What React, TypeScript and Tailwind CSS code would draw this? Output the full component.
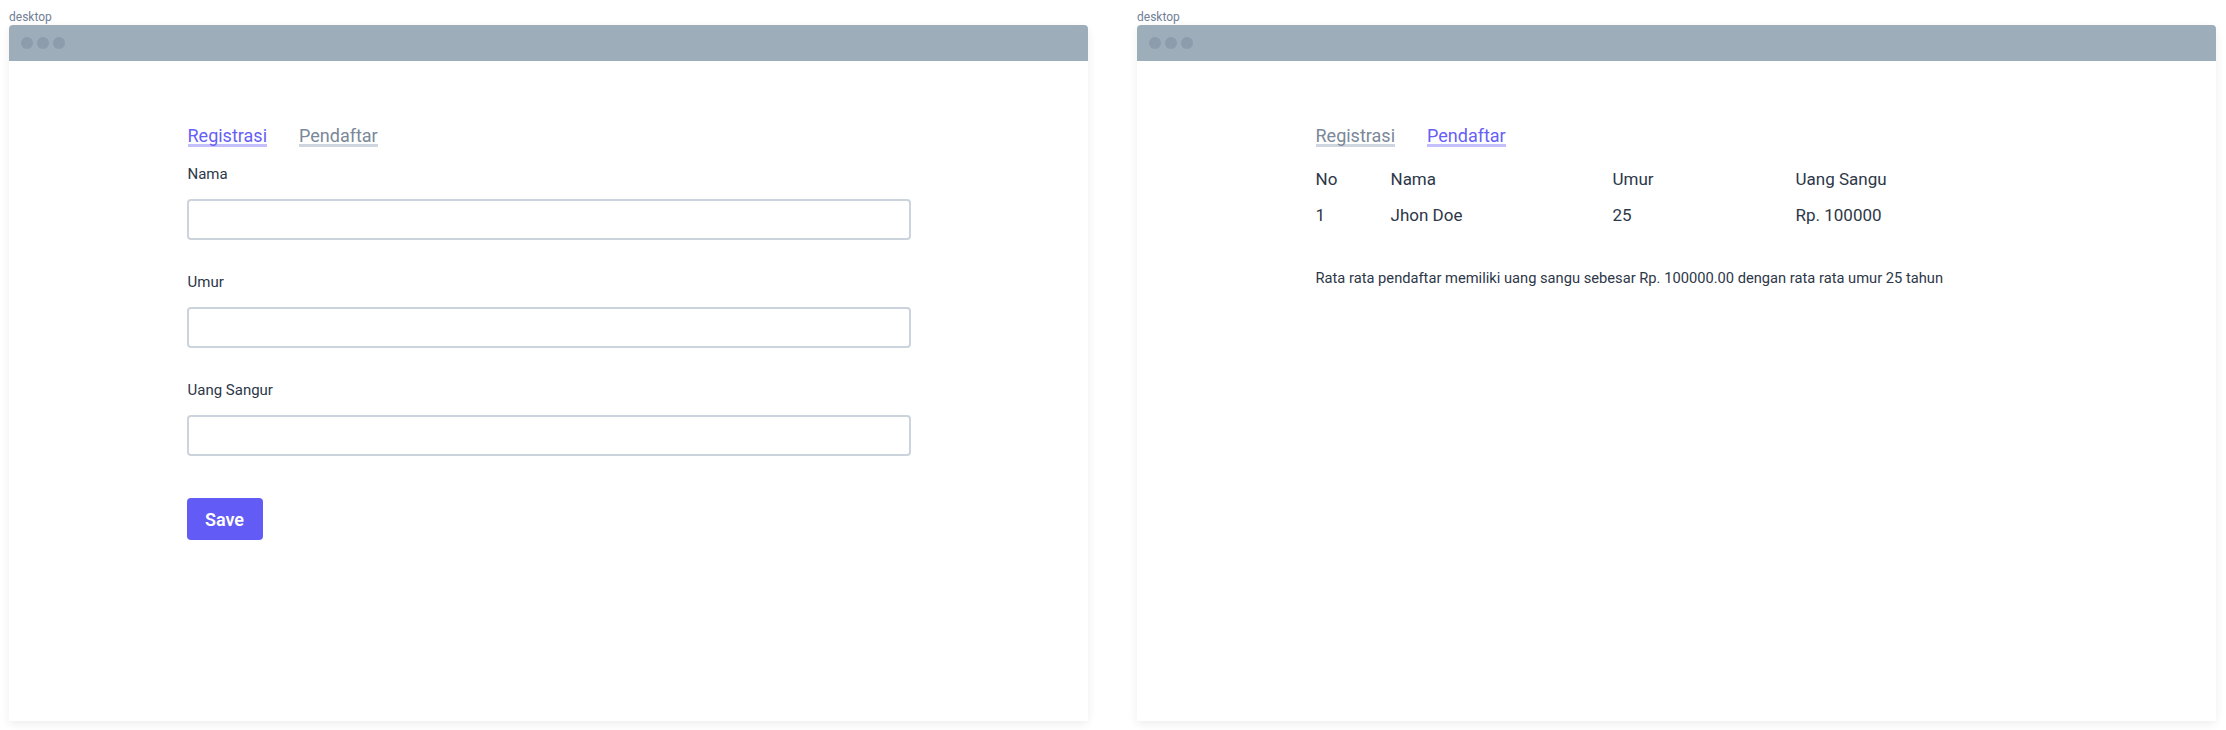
import React from 'react';

type Tab = 'registrasi' | 'pendaftar';

interface Pendaftar {
  no: number;
  nama: string;
  umur: number;
  uang: number;
}

const data: Pendaftar[] = [{ no: 1, nama: 'Jhon Doe', umur: 25, uang: 100000 }];

const Tabs: React.FC<{ active: Tab }> = ({ active }) => {
  const cls = (on: boolean) =>
    on
      ? 'inline-block leading-[16px] border-b-[3px] border-[#c4c0fd] text-[#675ff5]'
      : 'inline-block leading-[16px] border-b-[3px] border-[#cfd6df] text-[#7a8898]';
  return (
    <div className="flex gap-[32px] pl-[1px] text-[18px]">
      <span className={cls(active === 'registrasi')}>Registrasi</span>
      <span className={cls(active === 'pendaftar')}>Pendaftar</span>
    </div>
  );
};

const Field: React.FC<{ label: string; first?: boolean }> = ({ label, first }) => (
  <div className={first ? 'mt-[16px]' : 'mt-[31px]'}>
    <label className="block pl-[1px] text-[15px] leading-[22px] text-[#2d3748]">{label}</label>
    <input
      type="text"
      className="mt-[14px] block w-full h-[41px] rounded-[4px] border-2 border-[#cbd3dc] bg-white px-3 outline-none"
    />
  </div>
);

const Frame: React.FC<{ children: React.ReactNode }> = ({ children }) => (
  <div className="w-[1079px] flex flex-col">
    <div className="text-[12px] leading-[16px] text-[#718096] pt-[9px] h-[25px]">desktop</div>
    <div className="h-[696px] bg-white shadow-[0_3px_10px_rgba(0,0,0,0.07)] rounded-t-[4px] flex flex-col">
      <div className="h-[36px] bg-[#9eadba] rounded-t-[4px] flex items-center gap-[4px] pl-[12px]">
        <span className="w-[12px] h-[12px] rounded-full bg-[#8c9cac]" />
        <span className="w-[12px] h-[12px] rounded-full bg-[#8c9cac]" />
        <span className="w-[12px] h-[12px] rounded-full bg-[#8c9cac]" />
      </div>
      <div className="flex-1 pt-[67px]">
        <div className="w-[724px] mx-auto">{children}</div>
      </div>
    </div>
  </div>
);

const Registrasi: React.FC = () => (
  <Frame>
    <Tabs active="registrasi" />
    <Field label="Nama" first />
    <Field label="Umur" />
    <Field label="Uang Sangur" />
    <button className="mt-[42px] h-[42px] w-[76px] rounded-[4px] bg-[#635bf5] text-white text-[18px] font-semibold">
      Save
    </button>
  </Frame>
);

const DaftarPendaftar: React.FC = () => {
  const avgUang = data.reduce((s, d) => s + d.uang, 0) / data.length;
  const avgUmur = data.reduce((s, d) => s + d.umur, 0) / data.length;
  return (
    <Frame>
      <Tabs active="pendaftar" />
      <div className="mt-[20px] pl-[1px] text-[17px] leading-[24px] text-[#2d3748]">
        <div className="grid grid-cols-[75px_222px_183px_1fr]">
          <div>No</div>
          <div>Nama</div>
          <div>Umur</div>
          <div>Uang Sangu</div>
        </div>
        {data.map((d) => (
          <div key={d.no} className="grid grid-cols-[75px_222px_183px_1fr] mt-[12px]">
            <div>{d.no}</div>
            <div>{d.nama}</div>
            <div>{d.umur}</div>
            <div>Rp. {d.uang}</div>
          </div>
        ))}
      </div>
      <p className="mt-[40px] pl-[1px] text-[14.7px] leading-[22px] text-[#2d3748]">
        Rata rata pendaftar memiliki uang sangu sebesar Rp. {avgUang.toFixed(2)} dengan rata rata umur {avgUmur} tahun
      </p>
    </Frame>
  );
};

export default function App() {
  return (
    <div className="h-[730px] overflow-hidden bg-white flex gap-[49px] pl-[9px] font-['Roboto',sans-serif]">
      <Registrasi />
      <DaftarPendaftar />
    </div>
  );
}
